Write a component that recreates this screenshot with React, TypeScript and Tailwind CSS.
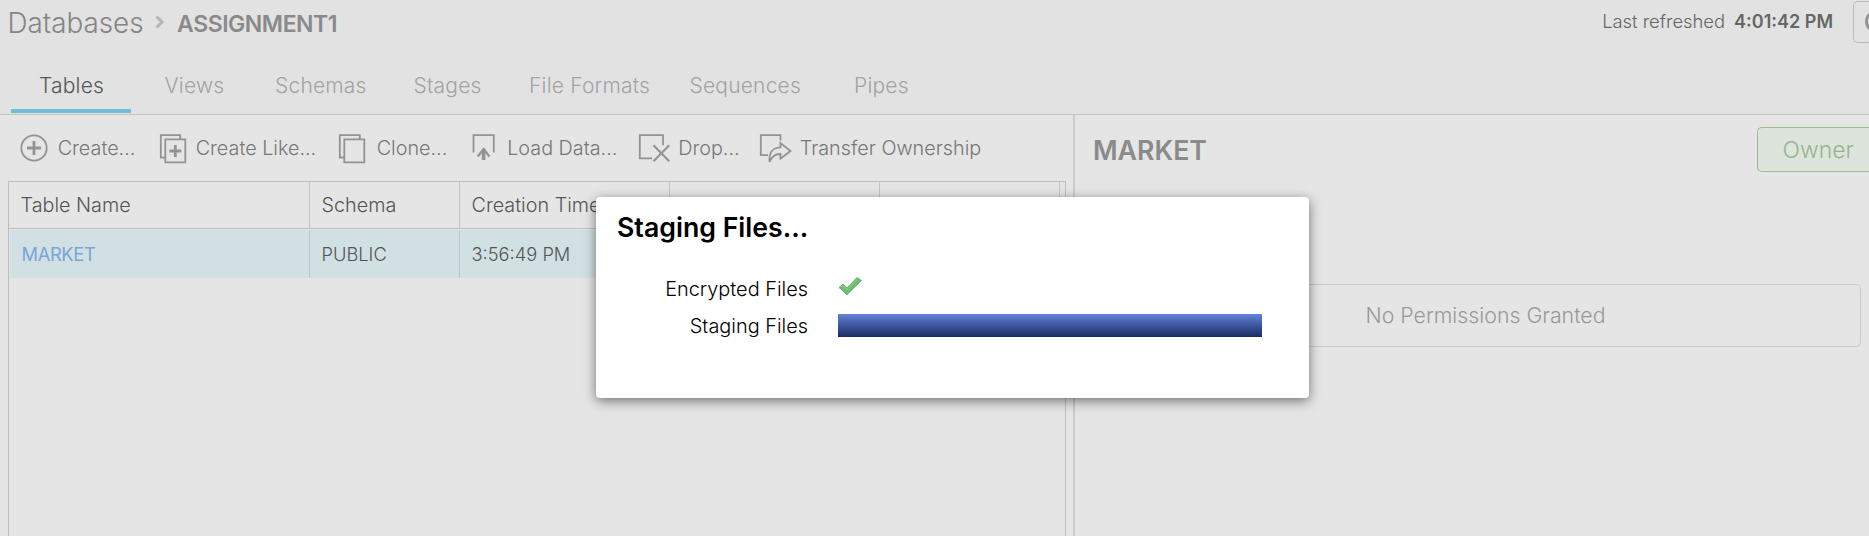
import React from "react";

const tabs = [
  { label: "Tables", cls: "w-[125.5px] text-[#555]" },
  { label: "Views", cls: "w-[110.5px] text-[#a3a3a3]" },
  { label: "Schemas", cls: "w-[138.5px] text-[#a3a3a3]" },
  { label: "Stages", cls: "w-[115.5px] text-[#a3a3a3]" },
  { label: "File Formats", cls: "w-[160.5px] text-[#a3a3a3]" },
  { label: "Sequences", cls: "w-[164.5px] text-[#a3a3a3]" },
  { label: "Pipes", cls: "w-[90px] text-[#a3a3a3]" },
];

function Icon({ children }: { children: React.ReactNode }) {
  return (
    <svg width="34" height="34" viewBox="0 0 34 34" fill="none" stroke="#939393" strokeWidth="1.8" className="shrink-0">
      {children}
    </svg>
  );
}

const actions = [
  {
    label: "Create...",
    cls: "w-[139px]",
    gap: "w-[37.5px]",
    icon: (
      <Icon>
        <circle cx="14" cy="17" r="12.7" />
        <path d="M14 10v14M7 17h14" strokeWidth="2.8" />
      </Icon>
    ),
  },
  {
    label: "Create Like...",
    cls: "w-[179px]",
    gap: "w-[36.5px]",
    icon: (
      <Icon>
        <path d="M5.8 26.5H1.8V4.2h19.4v4.5" />
        <path d="M6.300 8.400h20v23h-20z" />
        <path d="M16.3 14v12M10.3 20h12" strokeWidth="2.800" />
      </Icon>
    ),
  },
  {
    label: "Clone...",
    cls: "w-[134.5px]",
    gap: "w-[38.5px]",
    icon: (
      <Icon>
        <path d="M5.8 26.5H1.8V4.2h20v4.5" />
        <path d="M6.300 8.400h20v23h-20z" />
      </Icon>
    ),
  },
  {
    label: "Load Data...",
    cls: "w-[166px]",
    gap: "w-[34.5px]",
    icon: (
      <Icon>
        <path d="M1.500 21.5V4.2h20.3v17.3" />
        <path d="M11.6 29V18" strokeWidth="3.6" />
        <path d="M5.700 25.500l5.900-7.300 5.900 7.300" strokeWidth="2.300" />
      </Icon>
    ),
  },
  {
    label: "Drop...",
    cls: "w-[121px]",
    gap: "w-[39.5px]",
    icon: (
      <Icon>
        <path d="M14 27.3H1.8V4.2H25v10" />
        <path d="M15.5 14.3l15.7 16M31.2 14.3l-15.7 16" strokeWidth="2.1" />
      </Icon>
    ),
  },
  {
    label: "Transfer Ownership",
    cls: "",
    gap: "w-[40px]",
    icon: (
      <Icon>
        <path d="M9 24.2H1.8V4.2h19.7v5.3" />
        <path d="M10.5 31v-3c0-7 4-11.7 11-11.7v-4.2l10 7.900-10 7.600v-4.600c-6 0-8.500 2.500-11 8z" />
      </Icon>
    ),
  },
];

function Header() {
  return (
    <header className="flex h-[115px] flex-col justify-between border-b border-[#c3c5c5] bg-[#e2e2e2]">
      <div className="flex h-[45px] items-start">
        <div className="flex h-[46px] items-center pl-[7.5px] text-[27.8px] font-light leading-[46px] text-[#858585]">
          Databases
        </div>
        <svg width="10" height="14" viewBox="0 0 10 14" fill="none" stroke="#b4b4b4" strokeWidth="3" className="mt-[15px] ml-[11px]">
          <path d="M1.500 1.500l5.500 5.500-5.500 5.500" />
        </svg>
        <div className="ml-[12.5px] pt-px text-[23px] font-semibold leading-[46px] tracking-[-0.45px] text-[#8a8a8a]">
          ASSIGNMENT1
        </div>
        <div className="ml-auto flex h-[43px] items-center whitespace-pre text-[18.4px] font-light text-[#666]">
          Last refreshed
        </div>
        <div className="ml-[9px] flex h-[43px] items-center text-[18px] font-semibold text-[#666]">4:01:42 PM</div>
        <div className="mt-px ml-[20px] flex h-[42px] w-[16px] shrink-0 items-center overflow-hidden rounded-l-[5px] border border-r-0 border-[#b9b9b9]">
          <svg width="26" height="26" viewBox="0 0 26 26" fill="none" stroke="#949494" strokeWidth="3" className="ml-[9px] shrink-0">
            <path d="M20 6a9.500 9.500 0 1 0 2.500 7" />
          </svg>
        </div>
      </div>
      <nav className="flex h-[58px] flex-col justify-between">
        <div className="flex pl-[39px] text-[21px] font-light leading-[60px] tracking-[0.2px]">
          {tabs.map((t) => (
            <div key={t.label} className={"h-[53px] shrink-0 " + t.cls}>
              {t.label}
            </div>
          ))}
        </div>
        <div className="mb-px ml-[11px] h-[4px] w-[120px] shrink-0 bg-[#6fbdd6]" />
      </nav>
    </header>
  );
}

function TablePane() {
  const cell = "shrink-0 border-r border-[#c4c4c4] pl-[11.5px]";
  return (
    <section className="flex w-[1073px] shrink-0 flex-col pl-[8px]">
      <div className="flex h-[66px] items-center pl-[11.5px] text-[19.8px] font-light text-[#777]">
        {actions.map((a) => (
          <div key={a.label} className={"flex shrink-0 items-center whitespace-nowrap " + a.cls}>
            <span className={"flex shrink-0 " + a.gap}>{a.icon}</span>
            <span className="pt-[2px] pl-[0.7px]">{a.label}</span>
          </div>
        ))}
      </div>
      <div className="flex w-[1058px] flex-1 flex-col border border-b-0 border-[#bdbdbd]">
        <div className="flex h-[47px] border-b border-[#c0c0c0] text-[19.8px] font-light leading-[47px] text-[#555]">
          <div className={cell + " w-[301px]"}>Table Name</div>
          <div className={cell + " w-[150px]"}>Schema</div>
          <div className={cell + " w-[210px]"}>Creation Time</div>
          <div className={cell + " w-[210px]"} />
          <div className={cell + " w-[180px]"} />
        </div>
        <div className="mt-px ml-px flex h-[48px] bg-[#d1e0e2] text-[18.3px] font-light leading-[48px] text-[#555]">
          <div className={cell + " w-[300px] text-[#7ba4dc]"}>
            <span className="font-normal tracking-[-0.35px]">MARKET</span>
          </div>
          <div className={cell + " w-[150px]"}>PUBLIC</div>
          <div className={cell + " w-[210px]"}>3:56:49 PM</div>
        </div>
      </div>
    </section>
  );
}

function DetailPane() {
  return (
    <section className="flex flex-1 flex-col border-l-2 border-[#cbcbcb] pl-[17px]">
      <div className="flex h-[69px] items-center justify-between">
        <h2 className="pt-px pl-px text-[26.7px] font-semibold text-[#8a8a8a]">MARKET</h2>
        <div className="flex h-[45px] w-[112px] items-center rounded-l-[5px] border border-r-0 border-[#9dbb96] bg-[#dde4db] pt-px pl-[24.5px] text-[23px] font-light text-[#96b490]">
          Owner
        </div>
      </div>
      <div className="mt-[100px] mr-[8px] ml-[18px] flex h-[63px] items-center justify-center rounded-[5px] border border-[#c9c9c9] text-[21.3px] font-light text-[#999]">
        No Permissions Granted
      </div>
    </section>
  );
}

function StagingDialog() {
  return (
    <div className="absolute top-[197px] left-[596px] flex h-[201px] w-[713px] flex-col rounded-[4px] bg-white pl-[20px] text-black shadow-[0_3px_12px_rgba(0,0,0,0.5)]">
      <h1 className="h-[51px] pt-[10px] pl-px text-[26.7px] font-semibold leading-[40px]">Staging Files...</h1>
      <div className="mt-[22px] flex h-[38px] items-center text-[19.9px] font-light">
        <div className="w-[192px] pt-[2px] text-right">Encrypted Files</div>
        <svg width="26" height="22" viewBox="0 0 26 22" className="mb-[6px] ml-[30px]">
          <path d="M1 12.500L5 9l4 4L19 2.500l4.500 3L9 19.800z" fill="#6fbb6f" stroke="#5a9e5a" strokeWidth="0.7" />
          <path d="M3 12l2-1.500 4 4L19.500 4" fill="none" stroke="#93d08f" strokeWidth="1" />
        </svg>
      </div>
      <div className="flex h-[35px] items-center text-[19.9px] font-light">
        <div className="w-[192px] pt-[2px] text-right">Staging Files</div>
        <div className="ml-[30px] h-[23px] w-[424px] bg-linear-to-b from-[#6383da] to-[#1b2c62]" />
      </div>
    </div>
  );
}

export default function App() {
  return (
    <div className="relative flex h-[536px] w-[1869px] flex-col overflow-hidden bg-[#e5e5e5] font-['Inter',sans-serif]">
      <Header />
      <main className="flex flex-1">
        <TablePane />
        <DetailPane />
      </main>
      <StagingDialog />
    </div>
  );
}
